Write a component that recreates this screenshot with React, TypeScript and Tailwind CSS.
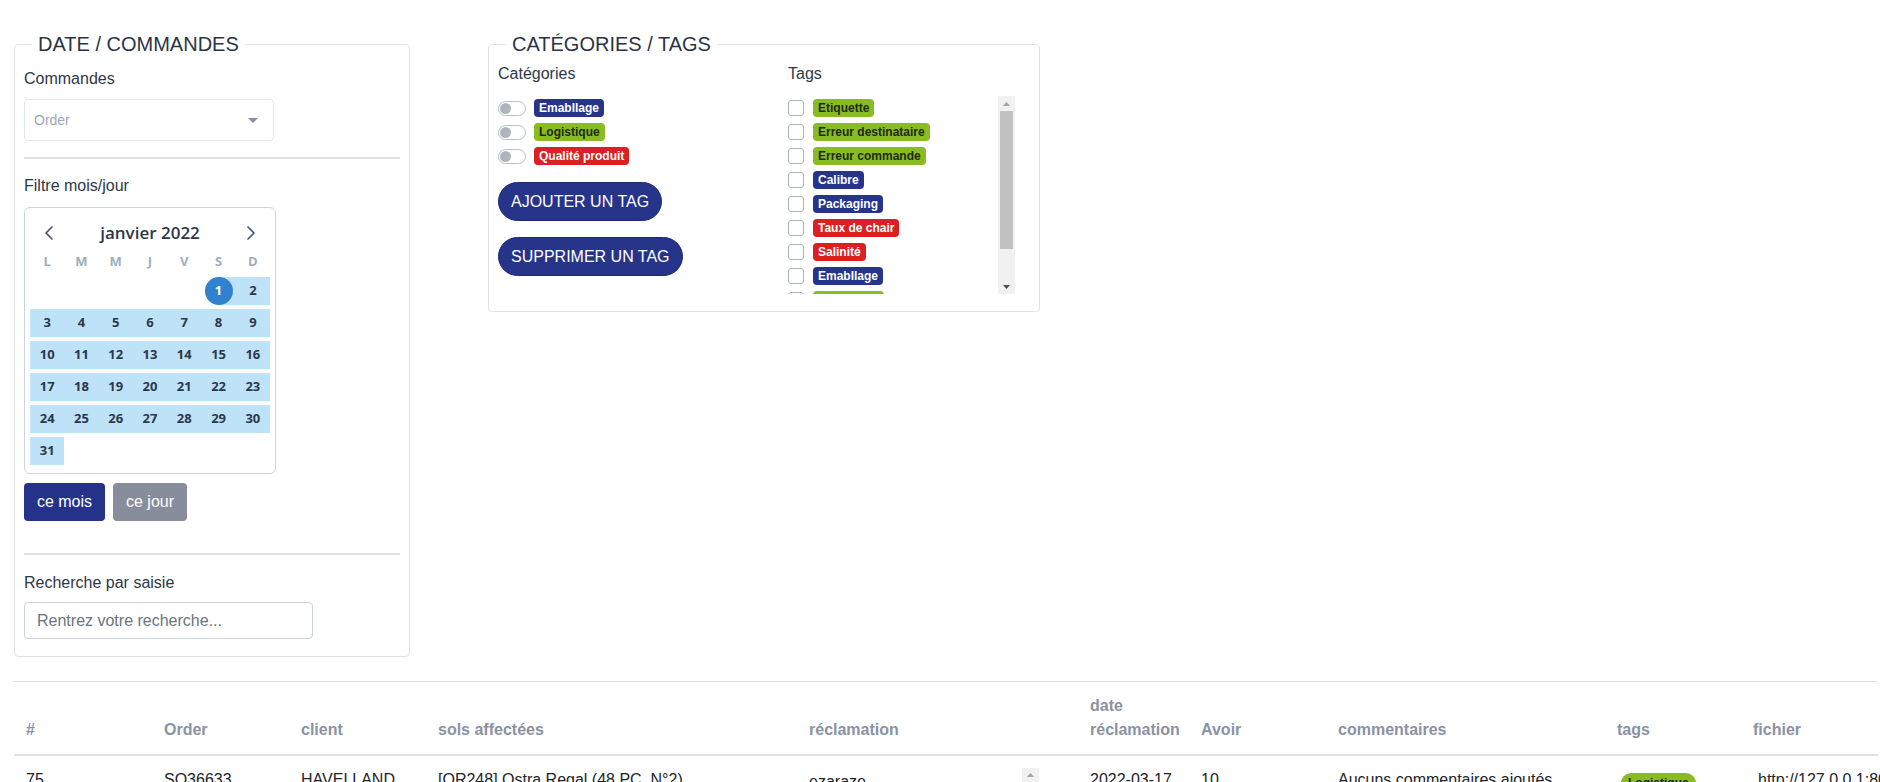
import * as React from "react";

type Tone = "navy" | "green" | "red";

const TONES: Record<Tone, string> = {
  navy: "bg-[#26348a] text-white",
  green: "bg-[#88bc22] text-[#1e2a12]",
  red: "bg-[#dc1f22] text-white",
};

const CATEGORIES: { label: string; tone: Tone }[] = [
  { label: "Emabllage", tone: "navy" },
  { label: "Logistique", tone: "green" },
  { label: "Qualité produit", tone: "red" },
];

const TAGS: { label: string; tone: Tone }[] = [
  { label: "Etiquette", tone: "green" },
  { label: "Erreur destinataire", tone: "green" },
  { label: "Erreur commande", tone: "green" },
  { label: "Calibre", tone: "navy" },
  { label: "Packaging", tone: "navy" },
  { label: "Taux de chair", tone: "red" },
  { label: "Salinité", tone: "red" },
  { label: "Emabllage", tone: "navy" },
  { label: "Logistique", tone: "green" },
  { label: "Qualité produit", tone: "red" },
];

const WEEKDAYS = ["L", "M", "M", "J", "V", "S", "D"];

const COLUMNS: { label: React.ReactNode; width: string }[] = [
  { label: "#", width: "w-[138px]" },
  { label: "Order", width: "w-[137px]" },
  { label: "client", width: "w-[137px]" },
  { label: "sols affectées", width: "w-[371px]" },
  { label: "réclamation", width: "w-[281px]" },
  { label: "date réclamation", width: "w-[111px]" },
  { label: "Avoir", width: "w-[137px]" },
  { label: "commentaires", width: "w-[279px]" },
  { label: "tags", width: "w-[136px]" },
  { label: "fichier", width: "w-[137px]" },
];

function Badge({ label, tone }: { label: string; tone: Tone }) {
  return (
    <span
      className={`inline-flex h-[18px] items-center rounded-[4px] px-[5px] text-[12px] font-bold leading-none ${TONES[tone]}`}
    >
      {label}
    </span>
  );
}

function Switch() {
  return (
    <span className="flex h-[15px] w-[28px] shrink-0 items-center rounded-full border border-[#b7bec6] bg-white px-[1px]">
      <span className="h-[11px] w-[11px] rounded-full bg-[#adb5bd]" />
    </span>
  );
}

function Legend({ children }: { children: React.ReactNode }) {
  return (
    <legend className="ml-2 px-[6px] text-[20px] leading-[28px] text-[#2b3445]">
      {children}
    </legend>
  );
}

function Chevron({ dir }: { dir: "left" | "right" }) {
  return (
    <svg width="10" height="16" viewBox="0 0 10 16" fill="none">
      <path
        d={dir === "left" ? "M8 2 L2 8 L8 14" : "M2 2 L8 8 L2 14"}
        stroke="#4a5568"
        strokeWidth="1.7"
        strokeLinecap="round"
        strokeLinejoin="round"
      />
    </svg>
  );
}

function Calendar() {
  const days = Array.from({ length: 31 }, (_, i) => i + 1);
  return (
    <div className="mt-[9px] w-[252px] rounded-[6px] border border-[#cbd5e0] px-[5px] pb-[8px] pt-3 font-['Open_Sans',sans-serif]">
      <div className="flex h-[26px] items-center justify-between px-[14px]">
        <Chevron dir="left" />
        <span className="text-[17px] font-semibold text-[#2d3748]">janvier 2022</span>
        <Chevron dir="right" />
      </div>
      <div className="mt-[6px] grid h-[20px] grid-cols-7 items-center text-center text-[13px] font-bold text-[#a0aec0]">
        {WEEKDAYS.map((d, i) => (
          <span key={i}>{d}</span>
        ))}
      </div>
      <div className="mt-[5px] grid grid-cols-7 gap-y-1 text-[13px] font-bold text-[#2d3748]">
        {Array.from({ length: 5 }, (_, i) => (
          <span key={`e${i}`} className="h-7" />
        ))}
        {days.map((d) =>
          d === 1 ? (
            <span
              key={d}
              className="flex h-7 items-center justify-center bg-[linear-gradient(to_right,transparent_50%,#bee3f8_50%)]"
            >
              <span className="flex h-7 w-7 items-center justify-center rounded-full bg-[#3182ce] text-white">
                1
              </span>
            </span>
          ) : (
            <span key={d} className="flex h-7 items-center justify-center bg-[#bee3f8]">
              {d}
            </span>
          ),
        )}
      </div>
    </div>
  );
}

function DateFieldset() {
  return (
    <fieldset className="w-[396px] shrink-0 rounded-[4px] border border-[#dfe3e8] px-[9px] pb-[17px] pt-0">
      <Legend>DATE / COMMANDES</Legend>
      <div className="mt-[9px] leading-6">Commandes</div>
      <div className="mt-2 flex h-[42px] w-[250px] items-center justify-between rounded-[4px] border border-[#e2e8f0] pl-[9px] pr-[15px] text-[14px] text-[#a0a8b5]">
        <span>Order</span>
        <svg width="10" height="5" viewBox="0 0 10 5">
          <path d="M0 0 L10 0 L5 5 Z" fill="#8a8f99" />
        </svg>
      </div>
      <hr className="mt-4 border-t-2 border-[#dee2e6]" />
      <div className="mt-[15px] leading-6">Filtre mois/jour</div>
      <Calendar />
      <div className="mt-[9px] flex gap-2">
        <button className="h-[38px] w-[81px] rounded-[4px] bg-[#25328a] text-white">ce mois</button>
        <button className="h-[38px] w-[74px] rounded-[4px] bg-[#888d9c] text-white">ce jour</button>
      </div>
      <hr className="mt-[32px] border-t-2 border-[#dee2e6]" />
      <div className="mt-4 leading-6">Recherche par saisie</div>
      <input
        className="mt-[7px] h-[37px] w-[289px] rounded-[4px] border border-[#ced4da] px-3 text-base outline-none placeholder:text-[#6c757d]"
        placeholder="Rentrez votre recherche..."
      />
    </fieldset>
  );
}

function FakeScrollbar() {
  return (
    <div className="flex w-[17px] shrink-0 flex-col bg-[#f1f1f1]">
      <div className="flex h-[15px] items-center justify-center">
        <svg width="7" height="4" viewBox="0 0 7 4">
          <path d="M0 4 L7 4 L3.5 0 Z" fill="#a3a3a3" />
        </svg>
      </div>
      <div className="mx-[2px] h-[138px] bg-[#c1c1c1]" />
      <div className="flex-1" />
      <div className="flex h-[15px] items-center justify-center">
        <svg width="7" height="4" viewBox="0 0 7 4">
          <path d="M0 0 L7 0 L3.5 4 Z" fill="#505050" />
        </svg>
      </div>
    </div>
  );
}

function TagsFieldset() {
  return (
    <fieldset className="w-[552px] shrink-0 rounded-[4px] border border-[#dfe3e8] px-[9px] pb-[17px] pt-0">
      <Legend>CATÉGORIES / TAGS</Legend>
      <div className="mt-1 flex">
        <div className="w-[290px]">
          <div className="leading-6">Catégories</div>
          <div className="mt-[10px]">
            {CATEGORIES.map((c) => (
              <div key={c.label} className="flex h-6 items-center gap-2">
                <Switch />
                <Badge {...c} />
              </div>
            ))}
          </div>
          <button className="mt-[14px] h-[39px] rounded-full border border-[#1d2870] bg-[#26348a] px-3 text-base text-white">
            AJOUTER UN TAG
          </button>
          <button className="mt-4 block h-[39px] rounded-full border border-[#1d2870] bg-[#26348a] px-3 text-base text-white">
            SUPPRIMER UN TAG
          </button>
        </div>
        <div className="w-[227px]">
          <div className="leading-6">Tags</div>
          <div className="mt-[10px] flex h-[198px]">
            <div className="flex-1 overflow-hidden">
              {TAGS.map((t, i) => (
                <label key={i} className="flex h-6 items-center gap-[9px]">
                  <input
                    type="checkbox"
                    className="h-4 w-4 shrink-0 appearance-none rounded-[3px] border border-[#adb5bd] bg-white"
                  />
                  <Badge {...t} />
                </label>
              ))}
            </div>
            <FakeScrollbar />
          </div>
        </div>
      </div>
    </fieldset>
  );
}

function ClaimsTable() {
  return (
    <table className="ml-[14px] mt-6 w-[1864px] table-fixed border-collapse text-left">
      <thead>
        <tr>
          {COLUMNS.map((c, i) => (
            <th
              key={i}
              className={`${c.width} border-b-2 border-t border-b-[#dee2e6] border-t-[#dee2e6] p-3 align-bottom font-bold leading-6 text-[#8a92a3]`}
            >
              {c.label}
            </th>
          ))}
        </tr>
      </thead>
      <tbody className="text-[#212529]">
        <tr className="align-top leading-6">
          <td className="p-3">75</td>
          <td className="p-3">SO36633</td>
          <td className="p-3">HAVELLAND</td>
          <td className="p-3">[OR248] Ostra Regal (48 PC. N°2)</td>
          <td className="p-3">
            <div className="flex w-[230px]">
              <div className="flex-1 pt-[2px]">ezaraze</div>
              <div className="flex h-[60px] w-[17px] justify-center bg-[#f1f1f1] pt-[5px]">
                <svg width="7" height="4" viewBox="0 0 7 4">
                  <path d="M0 4 L7 4 L3.5 0 Z" fill="#a3a3a3" />
                </svg>
              </div>
            </div>
          </td>
          <td className="p-3">2022-03-17</td>
          <td className="p-3">10</td>
          <td className="p-3">Aucuns commentaires ajoutés</td>
          <td className="p-3">
            <span className="ml-1 mt-[5px] inline-flex h-[20px] items-center rounded-full bg-[#88bc22] px-[7px] text-[12px] font-bold text-[#1e2a12]">
              Logistique
            </span>
          </td>
          <td className="whitespace-nowrap p-3">
            <a className="ml-[5px]">http://127.0.0.1:8000/media/reclamations/piece_jointe.pdf</a>
          </td>
        </tr>
      </tbody>
    </table>
  );
}

export default function App() {
  return (
    <div className="h-[782px] w-[1880px] overflow-hidden bg-white font-['Liberation_Sans',Arial,sans-serif] text-base text-[#2d3748]">
      <div className="flex items-start gap-[78px] pl-[14px] pt-[30px]">
        <DateFieldset />
        <TagsFieldset />
      </div>
      <ClaimsTable />
    </div>
  );
}
